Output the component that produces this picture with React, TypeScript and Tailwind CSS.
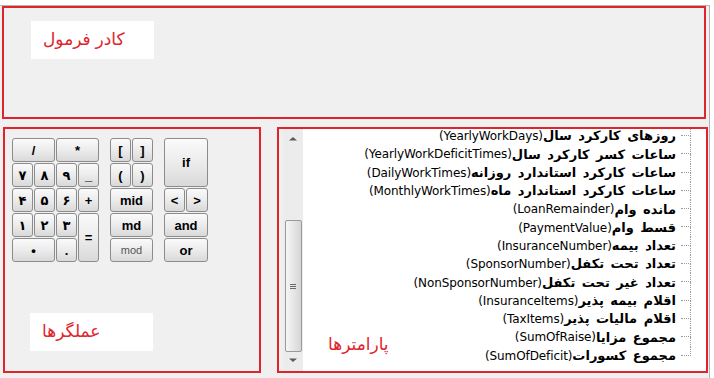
import React from "react";

const RED = "border-[#e0242c]";

type Key = {
  label: string;
  span?: string;
  light?: boolean;
};

const numKeys: Key[] = [
  { label: "/", span: "col-span-2" },
  { label: "*", span: "col-span-2" },
  { label: "۷" },
  { label: "۸" },
  { label: "۹" },
  { label: "_" },
  { label: "۴" },
  { label: "۵" },
  { label: "۶" },
  { label: "+" },
  { label: "۱" },
  { label: "۲" },
  { label: "۳" },
  { label: "=", span: "row-span-2" },
  { label: "•", span: "col-span-2" },
  { label: "." },
];

const midKeys: Key[] = [
  { label: "[" },
  { label: "]" },
  { label: "(" },
  { label: ")" },
  { label: "mid", span: "col-span-2" },
  { label: "md", span: "col-span-2" },
  { label: "mod", span: "col-span-2", light: true },
];

const logicKeys: Key[] = [
  { label: "if", span: "col-span-2 row-span-2" },
  { label: "<" },
  { label: ">" },
  { label: "and", span: "col-span-2" },
  { label: "or", span: "col-span-2" },
];

const params: [string, string][] = [
  ["روزهای کارکرد سال", "YearlyWorkDays"],
  ["ساعات کسر کارکرد سال", "YearlyWorkDeficitTimes"],
  ["ساعات کارکرد استاندارد روزانه", "DailyWorkTimes"],
  ["ساعات کارکرد استاندارد ماه", "MonthlyWorkTimes"],
  ["مانده وام", "LoanRemainder"],
  ["قسط وام", "PaymentValue"],
  ["تعداد بیمه", "InsuranceNumber"],
  ["تعداد تحت تکفل", "SponsorNumber"],
  ["تعداد غیر تحت تکفل", "NonSponsorNumber"],
  ["اقلام بیمه پذیر", "InsuranceItems"],
  ["اقلام مالیات پذیر", "TaxItems"],
  ["مجموع مزایا", "SumOfRaise"],
  ["مجموع کسورات", "SumOfDeficit"],
];

function CalcKey({ label, span, light }: Key) {
  return (
    <button
      type="button"
      className={`${span ?? ""} flex items-center justify-center rounded-[3px] border border-[#8c8c8c] bg-gradient-to-b from-[#fafafa] via-[#ececec] to-[#d9d9d9] leading-none ${
        light
          ? "text-[11px] font-normal text-[#555]"
          : "text-[13px] font-bold text-black"
      }`}
    >
      {label}
    </button>
  );
}

function KeyGroup({ keys, cols }: { keys: Key[]; cols: string }) {
  return (
    <div className={`grid ${cols} grid-rows-[24px_24px_24px_24px_24px] gap-[1px]`}>
      {keys.map((k, i) => (
        <CalcKey key={i} {...k} />
      ))}
    </div>
  );
}

function Label({ text, className }: { text: string; className?: string }) {
  return (
    <div
      className={`flex h-[38px] w-[123px] items-center bg-white pl-[12px] text-[17px] text-[#e0242c] ${className ?? ""}`}
    >
      <span dir="rtl">{text}</span>
    </div>
  );
}

function ArrowIcon({ down }: { down?: boolean }) {
  return (
    <svg width="8" height="5" viewBox="0 0 8 5" className={down ? "rotate-180" : ""}>
      <path d="M0 4.5 L4 1 L8 4.5 Z" fill="#5a5a5a" />
    </svg>
  );
}

function ScrollBar() {
  return (
    <div className="flex w-[20px] flex-col items-center bg-[#ececec]">
      <div className="flex h-[16px] items-center justify-center pt-[2px]">
        <ArrowIcon />
      </div>
      <div className="mt-[75px] flex h-[132px] w-[17px] items-center justify-center rounded-[2px] border border-[#9a9a9a] bg-gradient-to-r from-[#f6f6f6] to-[#d6d6d6]">
        <div className="flex flex-col gap-[1px]">
          <div className="h-[1px] w-[6px] bg-[#6a6a6a]" />
          <div className="h-[1px] w-[6px] bg-[#6a6a6a]" />
          <div className="h-[1px] w-[6px] bg-[#6a6a6a]" />
        </div>
      </div>
      <div className="flex flex-1 items-center justify-center pb-[2px]">
        <ArrowIcon down />
      </div>
    </div>
  );
}

function ParamRow({ fa, en, last }: { fa: string; en: string; last: boolean }) {
  return (
    <div className="flex h-[18.3px] items-stretch justify-end">
      <div
        dir="rtl"
        className="flex items-center whitespace-nowrap text-[12px] text-black"
        style={{ fontFamily: '"DejaVu Sans", sans-serif' }}
      >
        <span className="text-[13px] font-bold [word-spacing:2px]">{fa}</span>
        <span className="tracking-[-0.1px]">({en})</span>
      </div>
      <div className="ml-[5px] flex w-[10px] flex-col">
        <div className="h-[9px] border-b border-r border-dotted border-[#9a9a9a]" />
        <div className={`flex-1 ${last ? "" : "border-r border-dotted border-[#9a9a9a]"}`} />
      </div>
      <div className="w-[15px]" />
    </div>
  );
}

export default function App() {
  return (
    <div
      className="h-[378px] w-[714px] overflow-hidden bg-white pt-[5px]"
      style={{ fontFamily: '"Liberation Sans", "DejaVu Sans", sans-serif' }}
    >
      <div className="flex h-[373px] w-[710px] flex-col border-r border-t border-[#b4b4b4] bg-[#f0f0f0]">
        {/* formula frame */}
        <div className={`ml-[2px] h-[113px] w-[704px] border-2 ${RED} pl-[27px] pt-[13px]`}>
          <Label text="کادر فرمول" />
        </div>

        <div className="mt-[8px] flex">
          {/* operators */}
          <div className={`ml-[3px] flex h-[246px] w-[258px] flex-col border-2 ${RED} pl-[7px] pt-[9px]`}>
            <div className="flex">
              <KeyGroup keys={numKeys} cols="grid-cols-[21px_21px_21px_21px]" />
              <div className="ml-[11px]">
                <KeyGroup keys={midKeys} cols="grid-cols-[21px_21px]" />
              </div>
              <div className="ml-[11px]">
                <KeyGroup keys={logicKeys} cols="grid-cols-[21px_22px]" />
              </div>
            </div>
            <Label text="عملگرها" className="ml-[18px] mt-[51px]" />
          </div>

          {/* parameters */}
          <div className={`relative ml-[16px] flex h-[246px] w-[431px] border-2 ${RED} pl-[4px]`}>
            <ScrollBar />
            <div className="flex-1 overflow-hidden bg-white">
              <div className="-mt-[2px]">
                {params.map(([fa, en], i) => (
                  <ParamRow key={en} fa={fa} en={en} last={i === params.length - 1} />
                ))}
              </div>
            </div>
            <span
              dir="rtl"
              className="absolute left-[49px] top-[203px] text-[17px] text-[#e0242c]"
            >
              پارامترها
            </span>
          </div>
        </div>
      </div>
    </div>
  );
}
